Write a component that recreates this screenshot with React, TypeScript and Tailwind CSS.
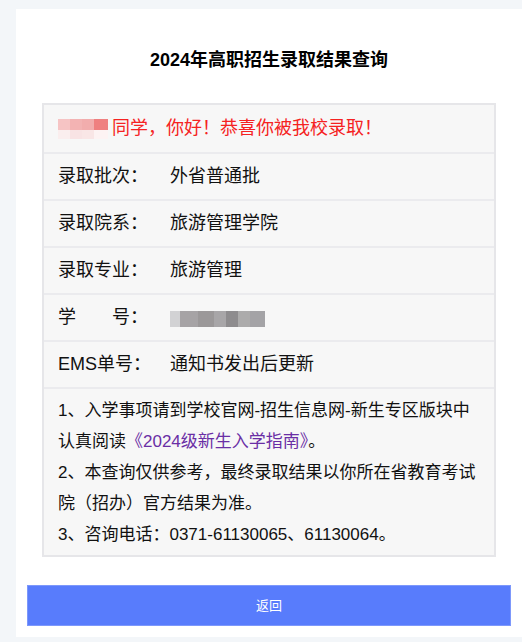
import React from 'react';

const FONT = { fontFamily: '"Liberation Sans", "Noto Sans CJK SC", sans-serif' };

const rows: { label: React.ReactNode; value: React.ReactNode }[] = [
  { label: '录取批次：', value: '外省普通批' },
  { label: '录取院系：', value: '旅游管理学院' },
  { label: '录取专业：', value: '旅游管理' },
  {
    label: (
      <span className="flex">
        <span>学</span>
        <span className="w-[36px]" />
        <span>号：</span>
      </span>
    ),
    value: (
      // 学号打码
      <span className="flex h-[16px] w-[95px] mt-[2px]">
        <span className="w-[10px] bg-[#d2d2d4]" />
        <span className="w-[18px] bg-[#a6a3a5]" />
        <span className="w-[16px] bg-[#9b9899]" />
        <span className="w-[12px] bg-[#a8a6a8]" />
        <span className="w-[12px] bg-[#8e8c8e]" />
        <span className="w-[12px] bg-[#acabab]" />
        <span className="w-[15px] bg-[#a4a3a6]" />
      </span>
    ),
  },
  { label: 'EMS单号：', value: '通知书发出后更新' },
];

const App: React.FC = () => {
  return (
    <div className="min-h-screen bg-[#f3f6f9] pt-[9px] pl-4" style={FONT}>
      <div className="bg-white pt-[39px] pb-[11px]">
        <h1 className="text-center text-[18px] leading-[24px] font-bold text-black">
          2024年高职招生录取结果查询
        </h1>

        {/* 结果表格 */}
        <div className="mx-[26px] mt-[31px] border-2 border-[#e6e6e9] bg-[#f7f7f7] text-[18px] text-[#111]">
          <div className="h-[47px] flex items-center pl-[14px] text-[#f52222]">
            <span className="flex flex-col w-[50px] h-[20px] mr-[4px]">
              <span className="flex h-[11px]">
                <span className="w-[12px] bg-[#f6c4c4]" />
                <span className="w-[12px] bg-[#f3b3b3]" />
                <span className="w-[12px] bg-[#f2adad]" />
                <span className="w-[14px] bg-[#ef8080]" />
              </span>
              <span className="flex h-[9px]">
                <span className="w-[12px] bg-[#faeeee]" />
                <span className="w-[12px] bg-[#f8e3e4]" />
                <span className="w-[12px] bg-[#f9e6e6]" />
                <span className="w-[14px] bg-[#fdf3f3]" />
              </span>
            </span>
            同学，你好！恭喜你被我校录取！
          </div>

          {rows.map((row, i) => (
            <div key={i} className="h-[47px] border-t-2 border-[#ebebee] flex items-center pl-[14px]">
              <div className="w-[112px] shrink-0">{row.label}</div>
              <div>{row.value}</div>
            </div>
          ))}

          <div className="border-t-2 border-[#ebebee] pl-[14px] pr-2 pt-[6px] pb-[5px] text-[17px] leading-[31px]">
            <p>1、入学事项请到学校官网-招生信息网-新生专区版块中</p>
            <p>
              认真阅读<span className="text-[#6a2ea5]">《2024级新生入学指南》</span>。
            </p>
            <p>2、本查询仅供参考，最终录取结果以你所在省教育考试</p>
            <p>院（招办）官方结果为准。</p>
            <p>3、咨询电话：0371-61130065、61130064。</p>
          </div>
        </div>

        <button className="mt-[28px] ml-[11px] w-[484px] h-[41px] bg-[#587cfc] border border-[#7d98fb] text-white text-[13px] flex items-center justify-center">
          返回
        </button>
      </div>
    </div>
  );
};

export default App;
